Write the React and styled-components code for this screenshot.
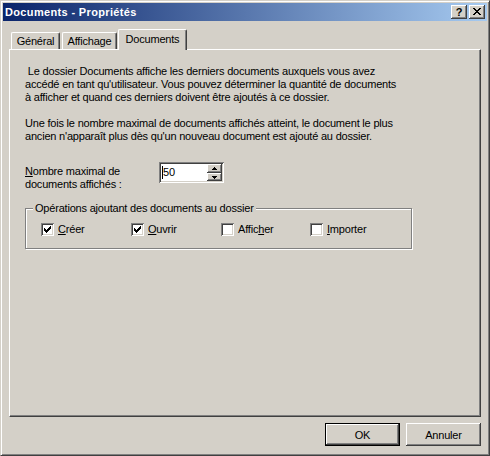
import React from "react";
import styled, { createGlobalStyle, css } from "styled-components";

const FACE = "#d4d0c8";

const GlobalStyle = createGlobalStyle`
  html, body {
    margin: 0;
    padding: 0;
    background: ${FACE};
  }
  body {
    font-family: "Liberation Sans", Arial, sans-serif;
    font-size: 11px;
    letter-spacing: -0.2px;
    color: #000;
  }
`;

const raised = css`
  box-shadow: inset -1px -1px #404040, inset 1px 1px #fff,
    inset -2px -2px #808080, inset 2px 2px ${FACE};
`;

const sunken = css`
  box-shadow: inset 1px 1px #808080, inset -1px -1px #fff,
    inset 2px 2px #404040, inset -2px -2px ${FACE};
`;

const Window = styled.div`
  box-sizing: border-box;
  width: 490px;
  height: 456px;
  background: ${FACE};
  border: 1px solid;
  border-color: ${FACE} #404040 #404040 ${FACE};
  box-shadow: inset 1px 1px #fff, inset -1px -1px #808080;
  padding: 2px;
  display: flex;
  flex-direction: column;
`;

const TitleBar = styled.div`
  height: 18px;
  flex-shrink: 0;
  display: flex;
  align-items: center;
  padding: 0 2px;
  background: linear-gradient(to right, #0a246a, #a6caf0);
`;

const Title = styled.span`
  flex: 1;
  color: #fff;
  font-weight: bold;
  font-size: 11px;
  letter-spacing: 0.35px;
  line-height: 18px;
  white-space: nowrap;
`;

const CaptionButton = styled.div`
  box-sizing: border-box;
  width: 16px;
  height: 14px;
  margin-left: ${(p) => p.$gap}px;
  background: ${FACE};
  ${raised};
  display: flex;
  align-items: center;
  justify-content: center;
  font-weight: bold;
  font-size: 11px;
  line-height: 12px;
  padding-bottom: 1px;
`;

const Body = styled.div`
  flex: 1;
  display: flex;
  flex-direction: column;
  padding: 0 6px 7px 6px;
`;

const TabStrip = styled.div`
  margin-top: 8px;
  height: 20px;
  display: flex;
  align-items: flex-end;
  padding-left: 2px;
`;

const Tab = styled.div`
  box-sizing: border-box;
  width: ${(p) => p.$w}px;
  height: ${(p) => (p.$active ? 21 : 17)}px;
  margin-left: ${(p) => p.$ml}px;
  margin-bottom: ${(p) => (p.$active ? -1 : 0)}px;
  position: relative;
  z-index: ${(p) => (p.$active ? 2 : 1)};
  background: ${FACE};
  border-top: 1px solid #fff;
  border-left: 1px solid #fff;
  border-right: 1px solid #404040;
  border-radius: 2px 2px 0 0;
  box-shadow: inset -1px 0 #808080;
  text-align: center;
  line-height: 13px;
  padding-top: ${(p) => (p.$active ? 3 : 2)}px;
  white-space: nowrap;
`;

const Panel = styled.div`
  flex: 1;
  box-sizing: border-box;
  border-top: 1px solid #fff;
  border-left: 1px solid #fff;
  border-right: 1px solid #404040;
  border-bottom: 1px solid #404040;
  box-shadow: inset -1px -1px #808080;
  padding: 15px 15px 0 15px;
  display: flex;
  flex-direction: column;
  align-items: flex-start;
`;

const Paragraph = styled.p`
  margin: 0 0 ${(p) => p.$after || 0}px 0;
  line-height: 13px;
  white-space: nowrap;
`;

const FieldRow = styled.div`
  display: flex;
  align-items: flex-start;
  margin-top: 19px;
`;

const FieldLabel = styled.div`
  width: 134px;
  padding-top: 3px;
  line-height: 13px;
`;

const SpinBox = styled.div`
  box-sizing: border-box;
  width: 65px;
  height: 21px;
  padding: 2px;
  background: #fff;
  ${sunken};
  display: flex;
`;

const SpinValue = styled.div`
  flex: 1;
  display: flex;
  align-items: center;
  padding-left: 1px;
  line-height: 13px;
`;

const Caret = styled.span`
  display: inline-block;
  width: 1px;
  height: 13px;
  background: #000;
`;

const SpinButtons = styled.div`
  width: 15px;
  display: flex;
  flex-direction: column;
`;

const SpinButton = styled.div`
  box-sizing: border-box;
  height: ${(p) => p.$h}px;
  background: ${FACE};
  ${raised};
  display: flex;
  align-items: center;
  justify-content: center;
`;

const GroupBox = styled.fieldset`
  box-sizing: border-box;
  width: 387px;
  margin: 11px 0 0 0;
  padding: 0 0 12px 0;
  border: 1px solid #808080;
  box-shadow: inset 1px 1px #fff, 1px 1px #fff;
  min-inline-size: 0;
`;

const Legend = styled.legend`
  margin-left: 7px;
  padding: 0 2px;
  line-height: 13px;
  background: ${FACE};
`;

const CheckRow = styled.div`
  display: grid;
  grid-template-columns: 90px 90px 89px auto;
  margin-top: 8px;
  padding-left: 15px;
`;

const CheckItem = styled.label`
  display: flex;
  align-items: center;
  gap: 4px;
  line-height: 13px;
`;

const CheckBox = styled.span`
  box-sizing: border-box;
  width: 13px;
  height: 13px;
  background: #fff;
  ${sunken};
  display: flex;
  align-items: center;
  justify-content: center;
`;

const ButtonRow = styled.div`
  display: flex;
  justify-content: flex-end;
  gap: 6px;
  margin-top: 6px;
`;

const DialogButton = styled.button`
  box-sizing: border-box;
  width: 75px;
  height: 23px;
  padding: 0;
  font-family: inherit;
  font-size: 11px;
  letter-spacing: inherit;
  color: #000;
  background: ${FACE};
  border: none;
  ${raised};
  ${(p) =>
    p.$default &&
    css`
      border: 1px solid #000;
      box-shadow: inset -1px -1px #404040, inset 1px 1px #fff,
        inset -2px -2px #808080;
    `}
`;

const CloseGlyph = () => (
  <svg width="8" height="7" viewBox="0 0 8 7" shapeRendering="crispEdges">
    <path
      d="M0 0h2v1h-2zM6 0h2v1h-2zM1 1h2v1h-2zM5 1h2v1h-2zM2 2h4v1h-4zM3 3h2v1h-2zM2 4h4v1h-4zM1 5h2v1h-2zM5 5h2v1h-2zM0 6h2v1h-2zM6 6h2v1h-2z"
      fill="#000"
    />
  </svg>
);

const CheckGlyph = () => (
  <svg width="7" height="7" viewBox="0 0 7 7" shapeRendering="crispEdges">
    <path
      d="M6 0h1v1h-1zM5 1h2v1h-2zM0 2h1v1h-1zM4 2h3v1h-3zM0 3h2v1h-2zM3 3h3v1h-3zM0 4h5v1h-5zM1 5h3v1h-3zM2 6h1v1h-1z"
      fill="#000"
    />
  </svg>
);

const Arrow = ({ up }) => (
  <svg width="5" height="3" viewBox="0 0 5 3" shapeRendering="crispEdges">
    <path
      d={up ? "M2 0h1v1h-1zM1 1h3v1h-3zM0 2h5v1h-5z" : "M0 0h5v1h-5zM1 1h3v1h-3zM2 2h1v1h-1z"}
      fill="#000"
    />
  </svg>
);

const options = [
  { before: "", key: "C", after: "réer", checked: true },
  { before: "", key: "O", after: "uvrir", checked: true },
  { before: "Affic", key: "h", after: "er", checked: false },
  { before: "", key: "I", after: "mporter", checked: false },
];

export default function App() {
  return (
    <>
      <GlobalStyle />
      <Window>
        <TitleBar>
          <Title>Documents - Propriétés</Title>
          <CaptionButton $gap={0}>?</CaptionButton>
          <CaptionButton $gap={2}>
            <CloseGlyph />
          </CaptionButton>
        </TitleBar>
        <Body>
          <TabStrip>
            <Tab $w={49} $ml={0}>Général</Tab>
            <Tab $w={55} $ml={2}>Affichage</Tab>
            <Tab $w={69} $ml={1} $active>
              Documents
            </Tab>
          </TabStrip>
          <Panel>
            <Paragraph $after={13}>
              &nbsp;Le dossier Documents affiche les derniers documents auxquels vous avez
              <br />
              accédé en tant qu'utilisateur. Vous pouvez déterminer la quantité de documents
              <br />
              à afficher et quand ces derniers doivent être ajoutés à ce dossier.
            </Paragraph>
            <Paragraph>
              Une fois le nombre maximal de documents affichés atteint, le document le plus
              <br />
              ancien n'apparaît plus dès qu'un nouveau document est ajouté au dossier.
            </Paragraph>
            <FieldRow>
              <FieldLabel>
                <u>N</u>ombre maximal de
                <br />
                documents affichés :
              </FieldLabel>
              <SpinBox>
                <SpinValue>
                  <Caret />
                  50
                </SpinValue>
                <SpinButtons>
                  <SpinButton $h={9}>
                    <Arrow up />
                  </SpinButton>
                  <SpinButton $h={8}>
                    <Arrow />
                  </SpinButton>
                </SpinButtons>
              </SpinBox>
            </FieldRow>
            <GroupBox>
              <Legend>Opérations ajoutant des documents au dossier</Legend>
              <CheckRow>
                {options.map((o) => (
                  <CheckItem key={o.key}>
                    <CheckBox>{o.checked && <CheckGlyph />}</CheckBox>
                    <span>
                      {o.before}
                      <u>{o.key}</u>
                      {o.after}
                    </span>
                  </CheckItem>
                ))}
              </CheckRow>
            </GroupBox>
          </Panel>
          <ButtonRow>
            <DialogButton $default>OK</DialogButton>
            <DialogButton>Annuler</DialogButton>
          </ButtonRow>
        </Body>
      </Window>
    </>
  );
}
